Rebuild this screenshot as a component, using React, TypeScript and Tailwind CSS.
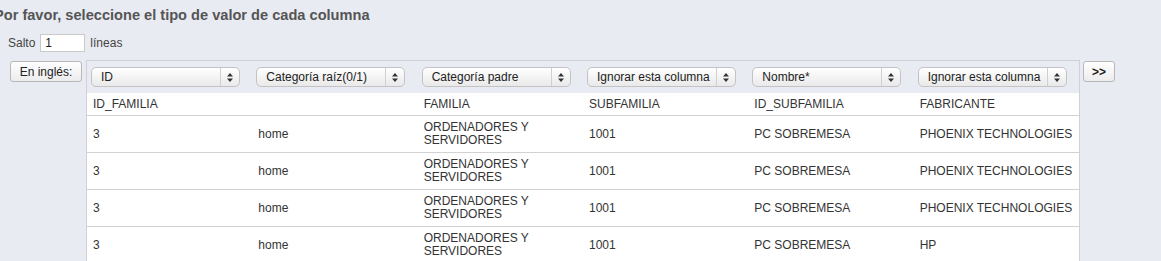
import React from "react";

const headers = ["ID", "Categoría raíz(0/1)", "Categoría padre", "Ignorar esta columna", "Nombre*", "Ignorar esta columna"];
const columnNames = ["ID_FAMILIA", "", "FAMILIA", "SUBFAMILIA", "ID_SUBFAMILIA", "FABRICANTE"];
const rows = [
  ["3", "home", "ORDENADORES Y SERVIDORES", "1001", "PC SOBREMESA", "PHOENIX TECHNOLOGIES"],
  ["3", "home", "ORDENADORES Y SERVIDORES", "1001", "PC SOBREMESA", "PHOENIX TECHNOLOGIES"],
  ["3", "home", "ORDENADORES Y SERVIDORES", "1001", "PC SOBREMESA", "PHOENIX TECHNOLOGIES"],
  ["3", "home", "ORDENADORES Y SERVIDORES", "1001", "PC SOBREMESA", "HP"],
];

function FakeSelect({ label }: { label: string }) {
  return (
    <div className="flex h-[20px] w-[149px] items-center rounded-[5px] border border-[#c3c3c3] bg-gradient-to-b from-[#ffffff] to-[#e9e9e9] text-[12px] text-[#222]">
      <span className="flex-1 truncate pl-[9px]">{label}</span>
      <span className="flex h-full w-[19px] items-center justify-center border-l border-[#d0d0d0]">
        <svg width="6" height="9" viewBox="0 0 6 9">
          <path d="M3 0 L6 3.5 L0 3.5 Z" fill="#333" />
          <path d="M0 5.5 L6 5.5 L3 9 Z" fill="#333" />
        </svg>
      </span>
    </div>
  );
}

function SmallButton({ children, className }: { children: React.ReactNode; className?: string }) {
  return (
    <div
      className={`flex h-[21px] items-center justify-center rounded-[3px] border border-[#b8b8b8] bg-gradient-to-b from-[#ffffff] to-[#ececec] text-[12px] text-[#222] ${className ?? ""}`}
    >
      {children}
    </div>
  );
}

export default function App() {
  return (
    <div className="h-[261px] w-[1161px] overflow-hidden bg-[#e9ebf3] font-['Liberation_Sans',Arial,sans-serif] text-[12px] text-[#333]">
      <h2 className="ml-[-6px] whitespace-nowrap pt-[5px] text-[14.6px] font-bold leading-[20px] text-[#555]">
        Por favor, seleccione el tipo de valor de cada columna
      </h2>
      <div className="mt-[9px] flex items-center pl-[8px] text-[#444]">
        <span>Salto</span>
        <div className="ml-[5px] flex h-[18px] w-[45px] items-center border border-[#c9c9c9] bg-white pl-[4px] text-[#222]">1</div>
        <span className="ml-[5px]">líneas</span>
      </div>
      <div className="mt-[8px] flex items-start">
        <SmallButton className="ml-[10px] mt-[1px] w-[72px]">En inglés:</SmallButton>
        <div className="ml-[4px] w-[994px] border-l border-t border-r border-[#cfd1d6]">
          <div className="grid h-[32px] grid-cols-6 items-center">
            {headers.map((h, i) => (
              <div key={i} className="pl-[4px]">
                <FakeSelect label={h} />
              </div>
            ))}
          </div>
          <div className="bg-white">
            <div className="grid h-[23px] grid-cols-6 items-center border-b border-[#d2d2d2]">
              {columnNames.map((c, i) => (
                <div key={i} className="pl-[6px]">{c}</div>
              ))}
            </div>
            {rows.map((r, ri) => (
              <div key={ri} className="grid h-[37px] grid-cols-6 items-center border-b border-[#d2d2d2]">
                {r.map((c, ci) => (
                  <div key={ci} className={`pl-[6px] leading-[13px] ${ci === 2 ? "max-w-[140px]" : ""}`}>
                    {c}
                  </div>
                ))}
              </div>
            ))}
          </div>
        </div>
        <SmallButton className="ml-[3px] mt-[1px] w-[32px] text-[10px] font-bold">&gt;&gt;</SmallButton>
      </div>
    </div>
  );
}
